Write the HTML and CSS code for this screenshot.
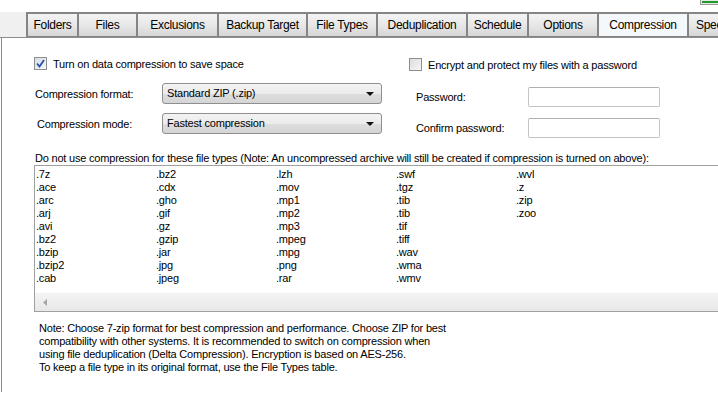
FILE: index.html
```html
<!DOCTYPE html>
<html lang="en">
<head>
    <meta charset="UTF-8">
    <title>Compression</title>
    <link rel="stylesheet" href="styles.css">
</head>
<body>
    <div class="topbar">
        <span class="go-btn"></span>
    </div>

    <div class="tabs">
        <div class="tab">Folders</div>
        <div class="tab">Files</div>
        <div class="tab">Exclusions</div>
        <div class="tab">Backup Target</div>
        <div class="tab">File Types</div>
        <div class="tab">Deduplication</div>
        <div class="tab">Schedule</div>
        <div class="tab">Options</div>
        <div class="tab active">Compression</div>
        <div class="tab">Speed</div>
    </div>

    <div class="panel">
        <div class="options">
            <div class="col-left">
                <label class="check">
                    <span class="box checked">
                        <svg width="9" height="9" viewBox="0 0 9 9"><path d="M1 4.5 L3.5 7.5 L8 1" fill="none" stroke="#2a4fa8" stroke-width="1.8"/></svg>
                    </span>
                    Turn on data compression to save space
                </label>
                <div class="field">
                    <span class="field-label">Compression format:</span>
                    <div class="select">Standard ZIP (.zip)<span class="arrow"></span></div>
                </div>
                <div class="field">
                    <span class="field-label shift">Compression mode:</span>
                    <div class="select">Fastest compression<span class="arrow"></span></div>
                </div>
            </div>

            <div class="col-right">
                <label class="check">
                    <span class="box"></span>
                    Encrypt and protect my files with a password
                </label>
                <div class="field pw">
                    <span class="field-label">Password:</span>
                    <div class="input"></div>
                </div>
                <div class="field pw">
                    <span class="field-label">Confirm password:</span>
                    <div class="input"></div>
                </div>
            </div>
        </div>

        <p class="list-title">Do not use compression for these file types (Note: An uncompressed archive will still be created if compression is turned on above):</p>

        <div class="listbox">
            <ul class="types">
                <li>.7z</li><li>.ace</li><li>.arc</li><li>.arj</li><li>.avi</li><li>.bz2</li><li>.bzip</li><li>.bzip2</li><li>.cab</li>
                <li>.bz2</li><li>.cdx</li><li>.gho</li><li>.gif</li><li>.gz</li><li>.gzip</li><li>.jar</li><li>.jpg</li><li>.jpeg</li>
                <li>.lzh</li><li>.mov</li><li>.mp1</li><li>.mp2</li><li>.mp3</li><li>.mpeg</li><li>.mpg</li><li>.png</li><li>.rar</li>
                <li>.swf</li><li>.tgz</li><li>.tib</li><li>.tib</li><li>.tif</li><li>.tiff</li><li>.wav</li><li>.wma</li><li>.wmv</li>
                <li>.wvl</li><li>.z</li><li>.zip</li><li>.zoo</li>
            </ul>
            <div class="hscroll">
                <svg width="4" height="7" viewBox="0 0 4 7"><path d="M4 0 L0 3.5 L4 7 Z" fill="#a6a6a6"/></svg>
            </div>
        </div>

        <p class="note">
            Note: Choose 7-zip format for best compression and performance. Choose ZIP for best<br>
            compatibility with other systems. It is recommended to switch on compression when<br>
            using file deduplication (Delta Compression). Encryption is based on AES-256.<br>
            To keep a file type in its original format, use the File Types table.
        </p>
    </div>
</body>
</html>
```

FILE: styles.css
```css
*{
    padding: 0;
    margin: 0;
    box-sizing: border-box;
}
body{
    width: 718px;
    height: 396px;
    overflow: hidden;
    background: #fff;
    font-family: "Liberation Sans", Arial, sans-serif;
    font-size: 11px;
    letter-spacing: -0.2px;
    color: #000;
}

/* strip above the tabs */
.topbar{
    height: 12px;
    display: flex;
    justify-content: flex-end;
}
.go-btn{
    width: 20px;
    height: 5px;
    margin-right: -2px;
    border: 1px solid #9a9a9a;
    border-top: 0;
    background: #1f9a28;
    box-shadow: inset 0 0 0 1px #e8e8e8;
}

/* tabs */
.tabs{
    display: flex;
    height: 26px;
    padding-left: 26px;
    background: #f0f0f0;
    border-bottom: 1px solid #8c8c8c;
    overflow: hidden;
}
.tab{
    flex: none;
    display: flex;
    align-items: center;
    justify-content: center;
    height: 25px;
    font-size: 12px;
    letter-spacing: -0.3px;
    border: 2px solid #858585;
    border-right: 0;
    border-bottom: 1px solid #858585;
    background: linear-gradient(#f4f4f4, #e6e6e6 55%, #d6d6d6);
}
.tab:nth-child(1){ width: 51px; }
.tab:nth-child(2){ width: 59px; }
.tab:nth-child(3){ width: 81px; }
.tab:nth-child(4){ width: 89px; }
.tab:nth-child(5){ width: 70px; }
.tab:nth-child(6){ width: 90px; }
.tab:nth-child(7){ width: 61px; }
.tab:nth-child(8){ width: 70px; }
.tab:nth-child(9){ width: 90px; }
.tab:nth-child(10){ width: 60px; justify-content: flex-start; padding-left: 7px; }
.tab.active{
    background: #f5f8fb;
}

/* main page */
.panel{
    height: 354px;
    margin-left: 1px;
    border-left: 1px solid #8c8c8c;
    padding: 19px 0 0 32px;
}

.options{
    display: flex;
    height: 94px;
}
.col-left{
    width: 375px;
}
.col-right{
    width: 270px;
}

.check{
    display: flex;
    align-items: center;
    gap: 6px;
    height: 13px;
}
.box{
    width: 13px;
    height: 13px;
    border: 1px solid #8e8f8f;
    background: linear-gradient(135deg, #dcdcdc, #f6f6f6);
    display: flex;
    align-items: center;
    justify-content: center;
}
.box.checked{
    background: linear-gradient(135deg, #d8dde6, #f4f6f9);
}
.col-right .check{
    margin-top: 1px;
}

.field{
    display: flex;
    align-items: center;
    margin-top: 9px;
}
.col-left .field:nth-of-type(1){
    margin-top: 13px;
}
.field-label{
    width: 128px;
    padding-left: 1px;
}
.field-label.shift{
    padding-left: 3px;
}
.select{
    position: relative;
    width: 220px;
    height: 21px;
    padding: 3px 0 0 4px;
    border: 1px solid #8f8f8f;
    border-radius: 3px;
    background: linear-gradient(#f3f3f3, #ebebeb 50%, #dddddd 51%, #d5d5d5);
}
.arrow{
    position: absolute;
    right: 7px;
    top: 8px;
    border-left: 4px solid transparent;
    border-right: 4px solid transparent;
    border-top: 4px solid #111;
}

.field.pw{
    padding-left: 6px;
    margin-top: 16px;
}
.field.pw + .field.pw{
    margin-top: 11px;
}
.field.pw .field-label{
    width: 113px;
    padding-left: 1px;
}
.input{
    width: 132px;
    height: 20px;
    border: 1px solid #c4c4c4;
    border-top-color: #b0b0b0;
    border-radius: 2px;
    background: #fff;
}

.list-title{
    line-height: 14px;
    margin-left: 1px;
}
.listbox{
    margin-top: 0;
    height: 147px;
    border: 1px solid #a0a0a0;
    border-right: 0;
    display: flex;
    flex-direction: column;
}
.types{
    list-style: none;
    flex: 1;
    display: grid;
    grid-auto-flow: column;
    grid-template-rows: repeat(9, 13px);
    grid-auto-columns: 120px;
    padding: 2px 0 0 1px;
    line-height: 13px;
}
.hscroll{
    height: 18px;
    display: flex;
    align-items: center;
    padding-left: 8px;
    border-top: 1px solid #f2f2f2;
    background: linear-gradient(#f3f3f3, #e8e8e8);
}

.note{
    margin: 10px 0 0 5px;
    line-height: 13px;
}
```
